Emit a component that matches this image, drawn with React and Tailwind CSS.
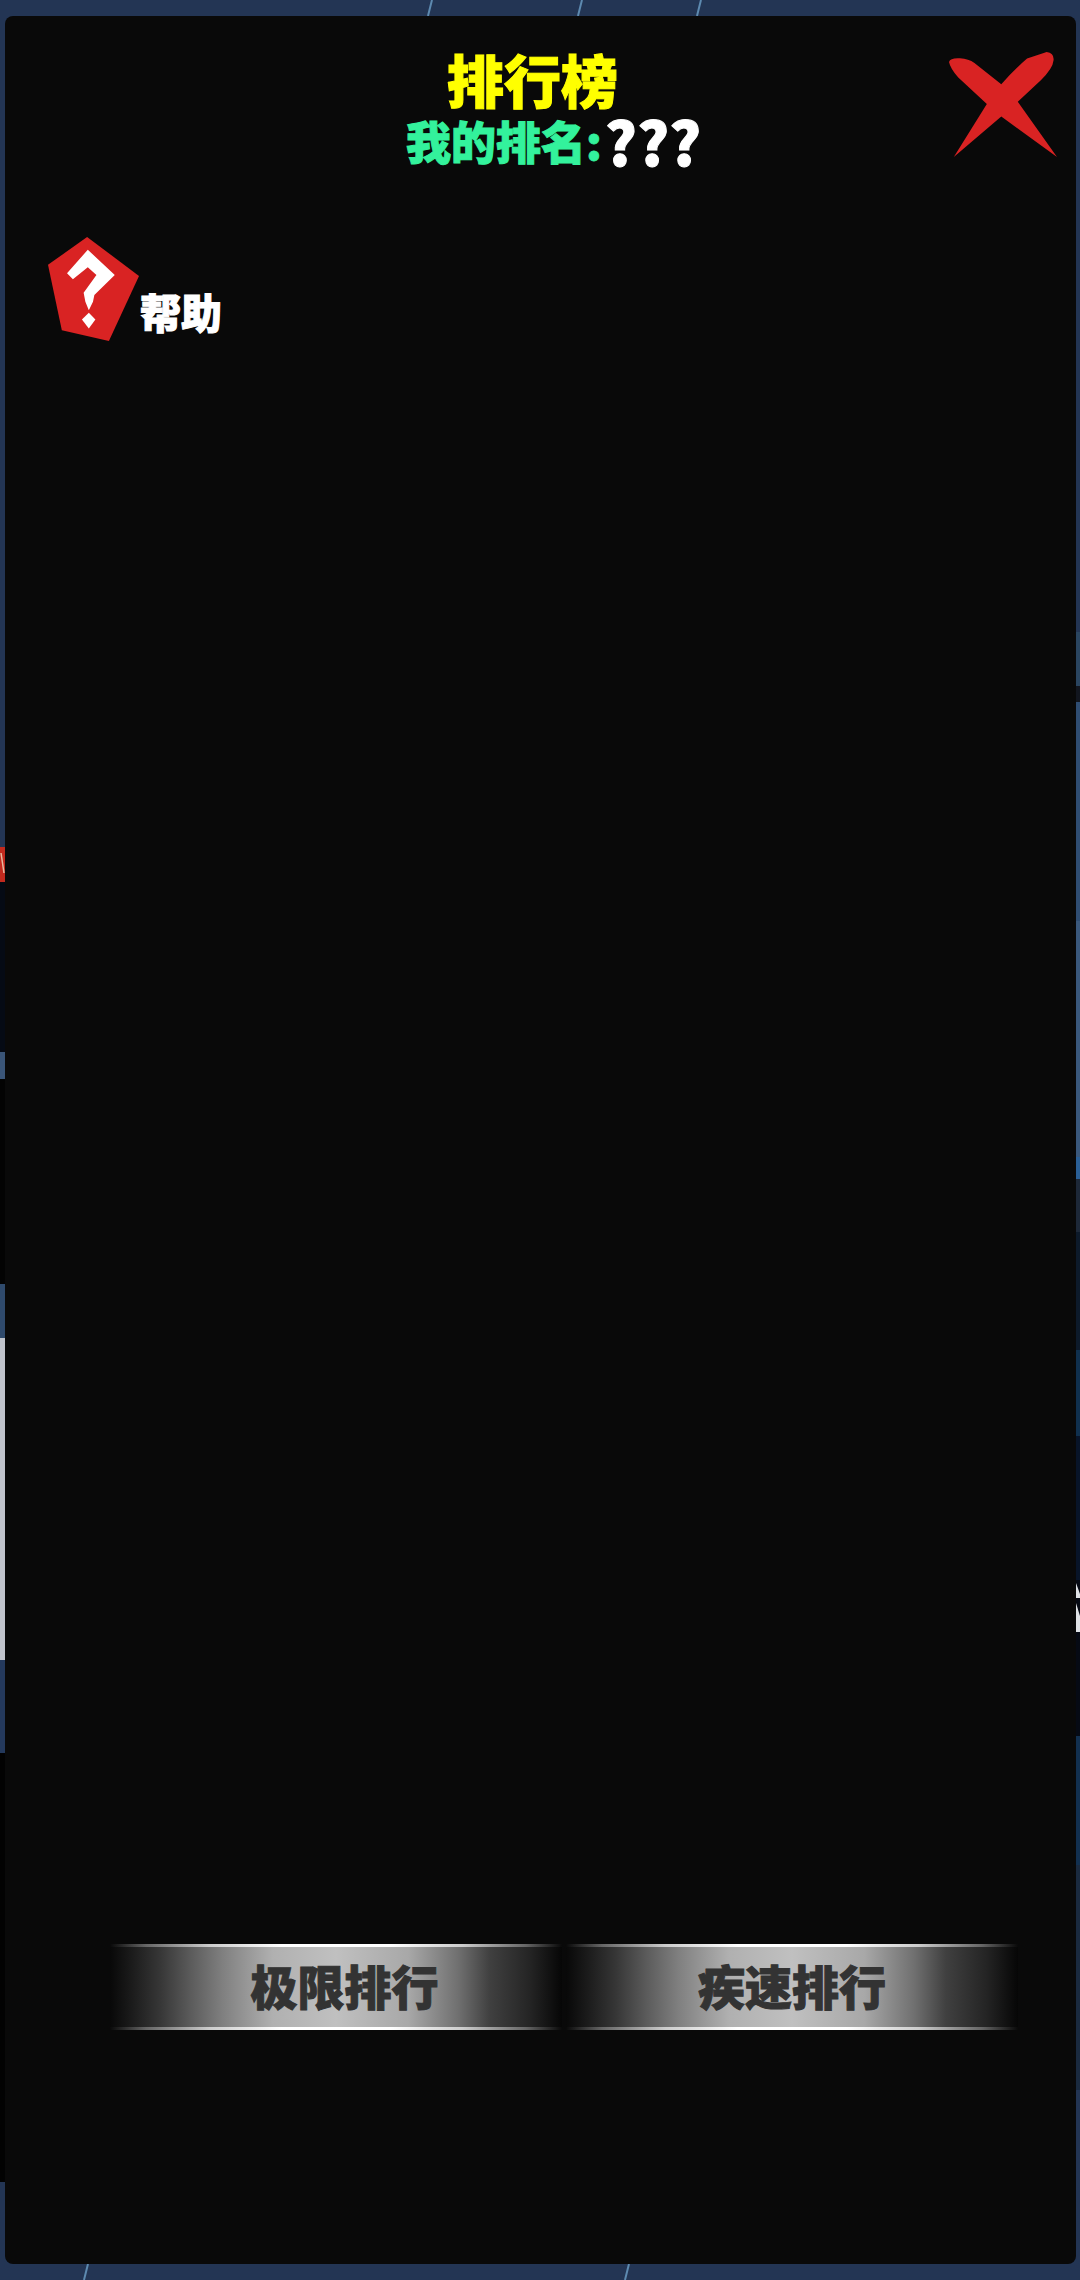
const leftTop = ['h-[847px] bg-[#233554]']

const leftBottom = [
  'h-[170px] bg-[#050a14]',
  'h-[27px] bg-[#3a5578]',
  'h-[205px] bg-[#030303]',
  'h-[54px] bg-[#2f4a6c]',
  'h-[322px] bg-[#c0c4cc]',
  'h-[93px] bg-[#24395c]',
  'h-[429px] bg-[#020202]',
  'flex-1 bg-[#233554]',
]

const rightTop = [
  'h-[632px] bg-[#233554]',
  'h-[54px] bg-[#2a4560]',
  'h-[16px] bg-[#12161f]',
  'h-[219px] bg-[#2f4d72]',
  'h-[236px] bg-[#3a587c]',
  'h-[22px] bg-[#2a5f96]',
  'h-[53px] bg-[#1d2838]',
  'h-[118px] bg-[#0d1a2a]',
  'h-[86px] bg-[#10304e]',
  'h-[144px] bg-[#081428]',
]

const rightBottom = [
  'h-[96px] bg-[#060a14]',
  'h-[129px] bg-[#123050]',
  'h-[225px] bg-[#1a2a3f]',
  'flex-1 bg-[#233554]',
]

function Streak({ className }) {
  return (
    <svg className={className} viewBox="0 0 10 16" preserveAspectRatio="none">
      <line x1="7" y1="0" x2="3" y2="16" stroke="#5d8ab0" strokeWidth="2" />
    </svg>
  )
}

function HelpIcon() {
  return (
    <svg className="w-[91px] h-[104px] shrink-0" viewBox="140 712 263 310" preserveAspectRatio="none">
      <polygon points="253,712 403,828 316,1022 180,990 140,795" fill="#d92323" />
      <path d="M255 750 L333 825 L274 885 L270 905 L258 930 L248 905 L243 878 L280 825 L255 802 L212 838 L195 820 Z" fill="#fff" />
      <polygon points="258,938 277,958 258,985 238,958" fill="#fff" />
    </svg>
  )
}

function CloseIcon() {
  return (
    <svg className="w-[108px] h-[105px] shrink-0" viewBox="1188 155 314 317" preserveAspectRatio="none">
      <path
        d="M1188 185 Q1192 172 1220 174 Q1245 176 1262 188 L1340 252 Q1378 208 1415 175 L1472 155 Q1494 158 1492 180 Q1490 205 1455 240 L1388 305 L1502 472 L1340 350 L1202 472 L1298 312 L1215 232 Q1192 205 1188 185 Z"
        fill="#d92323"
      />
    </svg>
  )
}

function RankTab({ label, className }) {
  return (
    <button className="w-[452px] h-[86px] flex flex-col">
      <span className="h-[3px] w-full bg-[linear-gradient(90deg,#0000,#666_8%,#ccc_22%,#fff_38%,#fff_62%,#ccc_78%,#666_92%,#0000)]" />
      <span className="flex-1 w-full flex items-center justify-center bg-[linear-gradient(90deg,#080808,#1c1c1c_5%,#363636_11%,#5c5c5c_18%,#808080_25%,#b0b0b0_36%,#c0c0c0_50%,#a8a8a8_66%,#707070_77%,#404040_84%,#242424_93%,#060606)]">
        <span className={`text-[47px] leading-none -mt-[6px] font-black text-[#333] [-webkit-text-stroke:1px_#333] ${className}`}>{label}</span>
      </span>
      <span className="h-[3px] w-full bg-[linear-gradient(90deg,#0000,#666_8%,#ccc_22%,#fff_38%,#fff_62%,#ccc_78%,#666_92%,#0000)]" />
    </button>
  )
}

export default function App() {
  return (
    <div className="relative w-[1080px] h-[2280px] overflow-hidden flex bg-[#233554] font-['Noto_Sans_CJK_SC','Noto_Sans',sans-serif]">
      <div className="w-[5px] flex flex-col">
        {leftTop.map((c, i) => <div key={i} className={c} />)}
        <svg className="w-[5px] h-[35px] shrink-0 bg-[#c22a1e]" viewBox="0 0 5 35">
          <line x1="1" y1="6" x2="4" y2="26" stroke="#e8b9a0" strokeWidth="1.5" />
        </svg>
        {leftBottom.map((c, i) => <div key={i} className={c} />)}
      </div>

      <div className="flex-1 py-[16px]">
        <div className="h-full rounded-[8px] bg-[#090909] flex flex-col">
          <div className="flex items-start">
            <div className="ml-[401px] mt-[32px] flex flex-col">
              <h1 className="ml-[41px] text-[57px] leading-[60px] font-black text-[#ffff00] [-webkit-text-stroke:1px_#ffff00]">排行榜</h1>
              <p className="flex items-center h-[60px] mt-[2px] font-black">
                <span className="text-[45px] leading-none text-[#33f29c] [-webkit-text-stroke:1px_#33f29c]">我的排名:</span>
                <span className="text-[60px] leading-none text-white ml-[3px] [-webkit-text-stroke:1px_#fff]">???</span>
              </p>
            </div>
            <button className="ml-auto mr-[19px] mt-[36px]">
              <CloseIcon />
            </button>
          </div>

          <div className="ml-[43px] mt-[67px] flex items-end">
            <HelpIcon />
            <span className="ml-[1px] mb-[6px] text-[41px] leading-[48px] font-black text-white [-webkit-text-stroke:1px_#fff]">帮助</span>
          </div>

          <div className="flex-1" />

          <div className="ml-[105px] mb-[234px] flex gap-[4px]">
            <RankTab label="极限排行" className="ml-[17px]" />
            <RankTab label="疾速排行" />
          </div>
        </div>
      </div>

      <div className="w-[4px] flex flex-col">
        {rightTop.map((c, i) => <div key={i} className={c} />)}
        <svg className="w-[4px] h-[60px] shrink-0 bg-[#060a14]" viewBox="0 0 4 60">
          <polygon points="0,3 4,14 4,18 0,18" fill="#dfe2e6" />
          <polygon points="0,23 4,36 4,52 0,52" fill="#dfe2e6" />
        </svg>
        {rightBottom.map((c, i) => <div key={i} className={c} />)}
      </div>

      {/* streaks of the game behind the dialog */}
      <Streak className="absolute top-0 left-[425px] w-[10px] h-[16px]" />
      <Streak className="absolute top-0 left-[575px] w-[10px] h-[16px]" />
      <Streak className="absolute top-0 left-[694px] w-[10px] h-[16px]" />
      <Streak className="absolute bottom-0 left-[81px] w-[10px] h-[16px]" />
      <Streak className="absolute bottom-0 left-[622px] w-[10px] h-[16px]" />
    </div>
  )
}
